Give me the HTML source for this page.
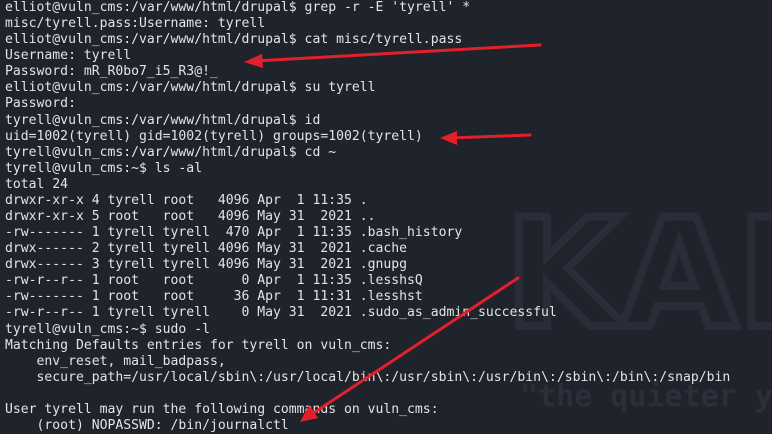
<!DOCTYPE html>
<html><head><meta charset="utf-8"><style>
html,body{margin:0;padding:0;background:#1f232b;width:772px;height:432px;overflow:hidden}
pre{position:absolute;left:5px;top:0;margin:0;font-family:"DejaVu Sans Mono","Liberation Mono",monospace;font-size:13.1px;line-height:16.08px;color:#e4e4e4;white-space:pre}
.wm{position:absolute;font-family:"DejaVu Sans",sans-serif;font-weight:bold;color:#272c36;white-space:nowrap}
svg{position:absolute;left:0;top:0}
</style></head><body>
<div class="wm" style="left:505px;top:200px;font-size:150px;line-height:150px;-webkit-text-stroke:8px #282d37;color:transparent">KALI</div>
<div class="wm" style="left:520px;top:380px;font-size:30px;line-height:34px;font-family:'DejaVu Sans Mono',monospace;color:#2a2f39">"the quieter you</div>
<pre>elliot@vuln_cms:/var/www/html/drupal$ grep -r -E 'tyrell' *
misc/tyrell.pass:Username: tyrell
elliot@vuln_cms:/var/www/html/drupal$ cat misc/tyrell.pass
Username: tyrell
Password: mR_R0bo7_i5_R3@!_
elliot@vuln_cms:/var/www/html/drupal$ su tyrell
Password:
tyrell@vuln_cms:/var/www/html/drupal$ id
uid=1002(tyrell) gid=1002(tyrell) groups=1002(tyrell)
tyrell@vuln_cms:/var/www/html/drupal$ cd ~
tyrell@vuln_cms:~$ ls -al
total 24
drwxr-xr-x 4 tyrell root   4096 Apr  1 11:35 .
drwxr-xr-x 5 root   root   4096 May 31  2021 ..
-rw------- 1 tyrell tyrell  470 Apr  1 11:35 .bash_history
drwx------ 2 tyrell tyrell 4096 May 31  2021 .cache
drwx------ 3 tyrell tyrell 4096 May 31  2021 .gnupg
-rw-r--r-- 1 root   root      0 Apr  1 11:35 .lesshsQ
-rw------- 1 root   root     36 Apr  1 11:31 .lesshst
-rw-r--r-- 1 tyrell tyrell    0 May 31  2021 .sudo_as_admin_successful
tyrell@vuln_cms:~$ sudo -l
Matching Defaults entries for tyrell on vuln_cms:
    env_reset, mail_badpass,
    secure_path=/usr/local/sbin\:/usr/local/bin\:/usr/sbin\:/usr/bin\:/sbin\:/bin\:/snap/bin

User tyrell may run the following commands on vuln_cms:
    (root) NOPASSWD: /bin/journalctl</pre>
<svg width="772" height="432">
<g stroke="#e3202a" stroke-width="3" fill="#e3202a" stroke-linecap="round">
<line x1="540" y1="45" x2="255" y2="61"/>
<polygon points="244,62 262,54 263,68" stroke="none"/>
<line x1="530" y1="135" x2="450" y2="138"/>
<polygon points="440,138 457,131 457,145" stroke="none"/>
<line x1="518" y1="278" x2="312" y2="414"/>
<polygon points="300,422 309,405 318,418" stroke="none"/>
</g></svg>
</body></html>
